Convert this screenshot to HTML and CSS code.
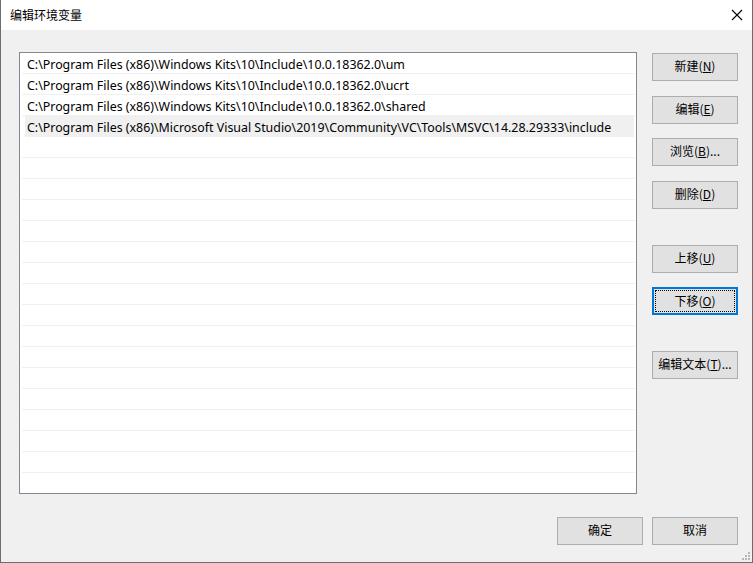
FILE: index.html
```html
<!DOCTYPE html>
<html lang="zh-CN">
<head>
<meta charset="utf-8">
<title>编辑环境变量</title>
<link rel="stylesheet" href="styles.css">
</head>
<body>
<div class="window">
  <div class="titlebar">
    <span class="title">编辑环境变量</span>
    <svg class="close" width="12" height="12" viewBox="0 0 12 12"><path d="M1 1 L11 11 M11 1 L1 11" stroke="#000" stroke-width="1.1" fill="none"/></svg>
  </div>
  <div class="content">
    <div class="main">
      <div class="list">
        <div class="row">C:\Program Files (x86)\Windows Kits\10\Include\10.0.18362.0\um</div>
        <div class="row">C:\Program Files (x86)\Windows Kits\10\Include\10.0.18362.0\ucrt</div>
        <div class="row">C:\Program Files (x86)\Windows Kits\10\Include\10.0.18362.0\shared</div>
        <div class="row hover">C:\Program Files (x86)\Microsoft Visual Studio\2019\Community\VC\Tools\MSVC\14.28.29333\include</div>
        <div class="row"></div>
        <div class="row"></div>
        <div class="row"></div>
        <div class="row"></div>
        <div class="row"></div>
        <div class="row"></div>
        <div class="row"></div>
        <div class="row"></div>
        <div class="row"></div>
        <div class="row"></div>
        <div class="row"></div>
        <div class="row"></div>
        <div class="row"></div>
        <div class="row"></div>
        <div class="row"></div>
        <div class="row"></div>
        <div class="row"></div>
      </div>
      <div class="side">
        <button class="btn">新建(<u>N</u>)</button>
        <button class="btn gap15">编辑(<u>E</u>)</button>
        <button class="btn gap14">浏览(<u>B</u>)...</button>
        <button class="btn gap15">删除(<u>D</u>)</button>
        <button class="btn gap36">上移(<u>U</u>)</button>
        <button class="btn gap14 focused"><span class="focusring">下移(<u>O</u>)</span></button>
        <button class="btn gap36">编辑文本(<u>T</u>)...</button>
      </div>
    </div>
    <div class="footer">
      <button class="btn">确定</button>
      <button class="btn">取消</button>
    </div>
  </div>
  <div class="grip">
    <i class="d1"></i><i class="d2"></i><i class="d3"></i>
    <i class="d4"></i><i class="d5"></i><i class="d6"></i>
  </div>
</div>
</body>
</html>
```
FILE: styles.css
```css
html, body {
  margin: 0;
  padding: 0;
  background: #f0f0f0;
}
body {
  font-family: "Noto Sans", "Noto Sans CJK SC", sans-serif;
  font-size: 12px;
  color: #000;
}
.window {
  position: relative;
  width: 753px;
  height: 563px;
  box-sizing: border-box;
  border-left: 1px solid #6d6d6d;
  border-right: 1px solid #6d6d6d;
  border-bottom: 1px solid #6d6d6d;
  background: #f0f0f0;
  display: flex;
  flex-direction: column;
}
.titlebar {
  height: 30px;
  background: #fff;
  display: flex;
  align-items: center;
  justify-content: space-between;
  padding: 0 9px 0 9px;
  flex: none;
}
.title {
  font-family: "Noto Sans CJK SC", sans-serif;
  font-size: 12px;
  margin-top: -1px;
}
.content {
  flex: 1;
  display: flex;
  flex-direction: column;
  padding: 22px 14px 0 18px;
}
.main {
  display: flex;
  gap: 15px;
}
.list {
  width: 618px;
  height: 442px;
  box-sizing: border-box;
  border: 1px solid #828790;
  background: #fff;
  overflow: hidden;
  padding: 0 1px;
}
.row {
  height: 18px;
  padding-top: 2px;
  line-height: 20px;
  font-size: 12.4px;
  border-bottom: 1px solid #f0f0f0;
  padding-left: 5px;
  white-space: nowrap;
  margin-left: 1px;
}
.row.hover {
  background: #f0f0f0;
  margin-left: 4px;
  margin-right: 1px;
  padding-left: 2px;
}
.side {
  display: flex;
  flex-direction: column;
  padding-top: 1px;
}
.btn {
  width: 86px;
  height: 28px;
  box-sizing: border-box;
  border: 1px solid #adadad;
  background: #e1e1e1;
  font-family: "Noto Sans CJK SC", sans-serif;
  font-size: 12px;
  color: #000;
  padding: 0 0 3px 0;
  margin: 0;
  display: flex;
  align-items: center;
  justify-content: center;
}
.btn u {
  text-decoration-thickness: 1px;
  text-underline-offset: 1px;
}
.gap14 { margin-top: 14px; }
.gap15 { margin-top: 15px; }
.gap36 { margin-top: 36px; }
.btn.focused {
  border: 2px solid #0078d7;
  padding: 1px;
}
.focusring {
  flex: 1;
  align-self: stretch;
  display: flex;
  align-items: center;
  justify-content: center;
  border: 1px dotted #000;
  padding-bottom: 2px;
}
.footer {
  display: flex;
  justify-content: flex-end;
  gap: 9px;
  margin-top: 23px;
}
.grip {
  position: absolute;
  right: 2px;
  bottom: 2px;
  width: 10px;
  height: 10px;
}
.grip i {
  position: absolute;
  width: 2px;
  height: 2px;
  background: #b8b8b8;
}
.grip .d1 { right: 0; bottom: 0; }
.grip .d2 { right: 3px; bottom: 0; }
.grip .d3 { right: 6px; bottom: 0; }
.grip .d4 { right: 0; bottom: 3px; }
.grip .d5 { right: 3px; bottom: 3px; }
.grip .d6 { right: 0; bottom: 6px; }
```
